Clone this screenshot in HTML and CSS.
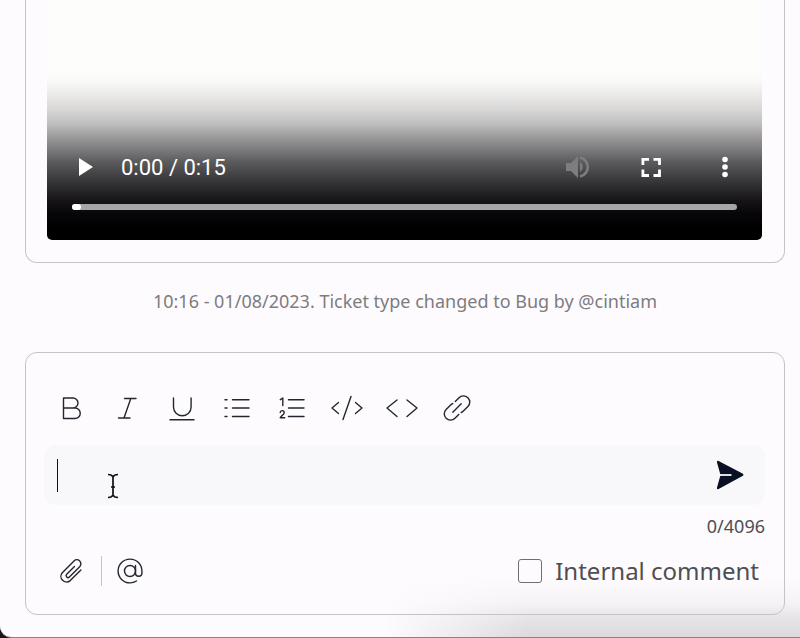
FILE: index.html
```
<!DOCTYPE html>
<html lang="en">
<head>
    <meta charset="UTF-8">
    <meta name="viewport" content="width=device-width, initial-scale=1.0">
    <title>Ticket</title>
    <link rel="stylesheet" href="styles.css">
</head>
<body>
    <main class="window">
        <section class="message">
            <div class="video">
                <div class="controls">
                    <button class="control" type="button" aria-label="Play">
                        <svg width="32" height="32" viewBox="0 0 32 32"><path d="M9 7v18l14-9z" fill="#fff"/></svg>
                    </button>
                    <span class="time">0:00 / 0:15</span>
                    <button class="control push" type="button" aria-label="Mute" disabled>
                        <svg width="32" height="32" viewBox="0 0 32 32" fill="#7d7c7e"><path d="M5 12h5l7-7v22l-7-7H5z"/><path d="M19 11a6 6 0 0 1 0 10z"/><path d="M19 6.500a9.700 9.700 0 0 1 0 19" fill="none" stroke="#7d7c7e" stroke-width="2.600"/></svg>
                    </button>
                    <button class="control" type="button" aria-label="Full screen">
                        <svg width="32" height="32" viewBox="0 0 32 32" fill="none" stroke="#fff" stroke-width="2.800"><path d="M7.900 14V8.400H14M18.500 8.400h6V14M24.500 18.500v6h-6M14 24.500H7.900v-6"/></svg>
                    </button>
                    <button class="control" type="button" aria-label="More options">
                        <svg width="32" height="32" viewBox="0 0 32 32" fill="#fff"><circle cx="16" cy="8.500" r="2.800"/><circle cx="16" cy="16" r="2.800"/><circle cx="16" cy="23.500" r="2.800"/></svg>
                    </button>
                </div>
                <input class="timeline" type="range" min="0" max="15" value="0" aria-label="Position">
            </div>
        </section>

        <p class="event">10:16 - 01/08/2023. Ticket type changed to Bug by @cintiam</p>

        <form class="composer">
            <div class="toolbar">
                <button class="tool" type="button" aria-label="Bold">
                    <svg class="icon" viewBox="0 0 32 32"><path d="M7.500 6H17a5 5 0 0 1 0 10H7.500zM7.500 16H19a5.200 5.200 0 0 1 0 10.500H7.500z"/></svg>
                </button>
                <button class="tool" type="button" aria-label="Italic">
                    <svg class="icon" viewBox="0 0 32 32"><path d="M13.500 6.500H25M7.500 26H19M19.800 6.500L13 26"/></svg>
                </button>
                <button class="tool" type="button" aria-label="Underline">
                    <svg class="icon" viewBox="0 0 32 32"><path d="M7.500 6v9a8.800 8.800 0 0 0 17.600 0V6M4 27.800h24"/></svg>
                </button>
                <button class="tool" type="button" aria-label="Bulleted list">
                    <svg class="icon" viewBox="0 0 32 32"><path d="M4 7.700h2M4 16h2M4 24.500h2M11.500 7.700H28M11.500 16H28M11.500 24.500H28"/></svg>
                </button>
                <button class="tool" type="button" aria-label="Numbered list">
                    <svg class="icon" viewBox="0 0 32 32"><path d="M12.500 7.700H28M12.500 16H28M12.500 24.500H28"/><path d="M4.300 7.700L6.800 6v7.500M4.200 20.500a2 2 0 0 1 4 .2c0 1.800-3 3-4 5h4.500"/></svg>
                </button>
                <button class="tool" type="button" aria-label="Code block">
                    <svg class="icon" viewBox="0 0 32 32"><path d="M7.500 10.500L1 16l6.500 5.500M24.500 10.500L31 16l-6.500 5.500M20 4.500l-8 23"/></svg>
                </button>
                <button class="tool" type="button" aria-label="Inline code">
                    <svg class="icon" viewBox="0 0 32 32"><path d="M11 8L1 16l10 8.500M21 8l10 8-10 8.500"/></svg>
                </button>
                <button class="tool" type="button" aria-label="Link">
                    <svg class="icon" viewBox="0 0 32 32"><path d="M14.300 9.500L18 5.700a6.200 6.200 0 0 1 8.900 8.900l-4.500 4.500a6.200 6.200 0 0 1-2.200 1.400M17.700 22.500L14 26.300a6.200 6.200 0 0 1-8.900-8.900l4.500-4.500a6.200 6.200 0 0 1 2.200-1.400M11.800 20.200l8.400-8.400"/></svg>
                </button>
            </div>

            <div class="field">
                <textarea class="text" rows="1" maxlength="4096" aria-label="Comment"></textarea>
                <span class="caret"></span>
                <svg class="pointer" width="14" height="28" viewBox="0 0 14 28" fill="none"><path d="M2 2.500q4 0 5 2.500Q8 2.500 12 2.500M7 4.500v19M2 25.500q4 0 5-2.500Q8 25.500 12 25.500M5 15h4" stroke="#111" stroke-width="1.700"/></svg>
                <button class="send" type="button" aria-label="Send">
                    <svg width="32" height="32" viewBox="0 0 32 32"><path d="M4.600 1.900L28.500 14.500q2 1.300 0 2.600L4.600 30.100q-2.200.6-1.600-1.700L6.500 16 3 3.600Q2.400 1.300 4.600 1.900z" fill="#0a1024"/><path d="M6 16h11.500" stroke="#f8f7fa" stroke-width="1.800"/></svg>
                </button>
            </div>
            <div class="counter">0/4096</div>

            <div class="footer">
                <button class="tool" type="button" aria-label="Attach file">
                    <svg class="icon" viewBox="0 0 32 32"><path d="M19.500 11.500l-7.800 7.800a1.900 1.900 0 0 0 2.700 2.700l10.300-10.300a4 4 0 0 0-5.700-5.700L7.300 17.700a5.600 5.600 0 0 0 7.900 7.900l10.700-10.700"/></svg>
                </button>
                <span class="divider"></span>
                <button class="tool" type="button" aria-label="Mention">
                    <svg class="icon" viewBox="0 0 32 32"><circle cx="16" cy="16" r="5.500"/><path d="M21.500 10.500V18a3.200 3.200 0 0 0 6.400 0v-2A11.900 11.900 0 1 0 16 27.900c2.500 0 4.500-.6 6.500-1.900"/></svg>
                </button>
                <label class="internal"><input class="check" type="checkbox">Internal comment</label>
            </div>
        </form>
    </main>
</body>
</html>
```
FILE: styles.css
```
* {
    margin: 0;
    padding: 0;
    box-sizing: border-box;
}
body {
    background: #151515;
    font-family: "Noto Sans", sans-serif;
}
button {
    background: none;
    border: none;
    cursor: pointer;
}
svg {
    display: block;
}
.window {
    min-height: 100vh;
    padding: 0 15px 22px 25px;
    border-bottom: 1px solid #858585;
    border-bottom-left-radius: 12px;
    background:
        linear-gradient(90deg, #fdfbfe 48%, #fdfbfe00 66%),
        linear-gradient(to top, #dcdadc, #e7e5e7 20px, #f5f3f6 34px, #fdfbfe 60px);
}
.message {
    padding: 0 22px 22px 21px;
    border: 1px solid #c4c4c6;
    border-top: none;
    border-radius: 0 0 12px 12px;
}
.video {
    display: flex;
    flex-direction: column;
    justify-content: flex-end;
    height: 240px;
    padding: 0 25px 30px;
    border-radius: 0 0 5px 5px;
    background: linear-gradient(#fdfdfb 70px, #f8f8f7 82px, #e7e6e5 98px, #d7d6d6 110px, #bfbebf 124px, #9c9b9a 137px, #828183 147px, #5b5a5c 162px, #444345 174px, #2b2a2c 188px, #151316 201px, #070508 214px, #000 228px);
}
.controls {
    display: flex;
    align-items: center;
    gap: 34px;
    margin: 0 -8px 17px -6px;
}
.control {
    display: flex;
    align-items: center;
    justify-content: center;
    width: 40px;
    height: 40px;
}
.time {
    margin-left: -19px;
    color: white;
    font-family: Roboto, sans-serif;
    font-size: 22px;
}
.push {
    margin-left: auto;
}
.timeline {
    appearance: none;
    width: 100%;
    height: 6px;
    border-radius: 3px;
    background: #a5a4a6;
}
.timeline::-webkit-slider-thumb {
    appearance: none;
    width: 9px;
    height: 6px;
    border-radius: 3px;
    background: white;
}
.event {
    margin: 26px 0 39px;
    color: #7d7c7f;
    font-size: 18px;
    line-height: 24px;
    text-align: center;
}
.composer {
    padding: 35px 19px 23px 18px;
    border: 1px solid #c4c4c6;
    border-radius: 12px;
}
.toolbar {
    display: flex;
    flex-wrap: wrap;
    gap: 15px;
    padding-left: 8px;
}
.tool {
    display: flex;
    align-items: center;
    justify-content: center;
    width: 40px;
    height: 40px;
}
.icon {
    width: 32px;
    height: 32px;
    fill: none;
    stroke: #23262f;
    stroke-width: 1.4;
    stroke-linecap: round;
    stroke-linejoin: round;
}
.field {
    position: relative;
    display: flex;
    align-items: center;
    height: 60px;
    margin-top: 17px;
    padding: 0 15px 0 13px;
    border-radius: 12px;
    background: #f8f7fa;
}
.text {
    flex: 1;
    height: 34px;
    border: none;
    outline: none;
    background: none;
    font: 24px/34px "Noto Sans", sans-serif;
    resize: none;
}
.caret {
    position: absolute;
    left: 13px;
    top: 14px;
    width: 1px;
    height: 33px;
    background: #0a1024;
}
.pointer {
    position: absolute;
    left: 62px;
    top: 27px;
}
.send {
    display: flex;
    align-items: center;
    justify-content: center;
    width: 40px;
    height: 40px;
}
.counter {
    margin-top: 9px;
    color: #4f4e51;
    font-size: 18px;
    line-height: 24px;
    text-align: right;
}
.footer {
    display: flex;
    align-items: center;
    margin-top: 13px;
    padding: 0 6px 0 7px;
}
.divider {
    width: 1px;
    height: 30px;
    margin: 0 8px 0 10px;
    background: #c4c4c6;
}
.internal {
    display: flex;
    align-items: center;
    gap: 13px;
    margin-left: auto;
    color: #4f4e51;
    font-size: 24px;
    line-height: 34px;
}
.check {
    appearance: none;
    width: 24px;
    height: 24px;
    border: 1px solid #6f6e71;
    border-radius: 3px;
}
```
